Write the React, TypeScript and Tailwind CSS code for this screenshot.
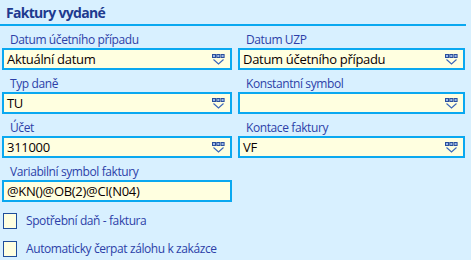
import React from "react";

const font = { fontFamily: '"Segoe UI", "Open Sans", "Noto Sans", sans-serif' };

function DropIcon() {
  return (
    <svg width="13" height="11" viewBox="0 0 13 11" className="shrink-0">
      <rect x="0.5" y="0.5" width="3" height="3" fill="#9bb8e8" stroke="#2a4f9c" strokeWidth="1" />
      <rect x="4.8" y="0.5" width="3" height="3" fill="#9bb8e8" stroke="#2a4f9c" strokeWidth="1" />
      <rect x="9.1" y="0.5" width="3" height="3" fill="#9bb8e8" stroke="#2a4f9c" strokeWidth="1" />
      <polyline points="1.5,5.5 6.5,10 11.5,5.5" fill="none" stroke="#3a66b8" strokeWidth="1.1" />
    </svg>
  );
}

function Field({ label, value, dropdown = true }: { label: string; value: string; dropdown?: boolean }) {
  return (
    <div className="flex flex-col">
      <div className="h-[16px] pl-[8px] text-[12px] leading-[16px] tracking-[-0.4px] text-[#2c3fa8]">{label}</div>
      <div className="h-[22px] border-2 border-[#0aa8f0] bg-[#ffffe0] flex items-center pl-[3px] pr-[5px]">
        <span className="flex-1 text-[13px] leading-[18px] tracking-[-0.3px] text-[#0a0000] whitespace-nowrap">{value}</span>
        {dropdown && <DropIcon />}
      </div>
    </div>
  );
}

function Check({ label }: { label: string }) {
  return (
    <div className="flex items-center h-[17px]">
      <div className="ml-[3px] w-[14px] h-[16px] border-[1.5px] border-[#1f4e9a] bg-[#ffffe0]" />
      <span className="ml-[9px] text-[12px] leading-[16px] tracking-[-0.4px] text-[#2c3fa8] whitespace-nowrap">{label}</span>
    </div>
  );
}

export default function App() {
  return (
    <div className="w-[471px] h-[260px] bg-[#d8f0ff] overflow-hidden" style={font}>
      <div className="pl-[6px] pt-[4px] h-[24px] text-[14px] font-bold leading-[18px] tracking-[-0.7px] text-[#1e3a8f]">Faktury vydané</div>
      <div className="w-[466px] h-[2px] bg-[#0aa8f0]" />
      <div className="pl-[2px] pt-[6px] grid grid-cols-[230px_227px] gap-x-[6px] gap-y-[6px]">
        <Field label="Datum účetního případu" value="Aktuální datum" />
        <Field label="Datum UZP" value="Datum účetního případu" />
        <Field label="Typ daně" value="TU" />
        <Field label="Konstantní symbol" value="" />
        <Field label="Účet" value="311000" />
        <Field label="Kontace faktury" value="VF" />
        <Field label="Variabilní symbol faktury" value="@KN()@OB(2)@CI(N04)" dropdown={false} />
      </div>
      <div className="pt-[10px] flex flex-col gap-[11px]">
        <Check label="Spotřební daň - faktura" />
        <Check label="Automaticky čerpat zálohu k zakázce" />
      </div>
    </div>
  );
}
